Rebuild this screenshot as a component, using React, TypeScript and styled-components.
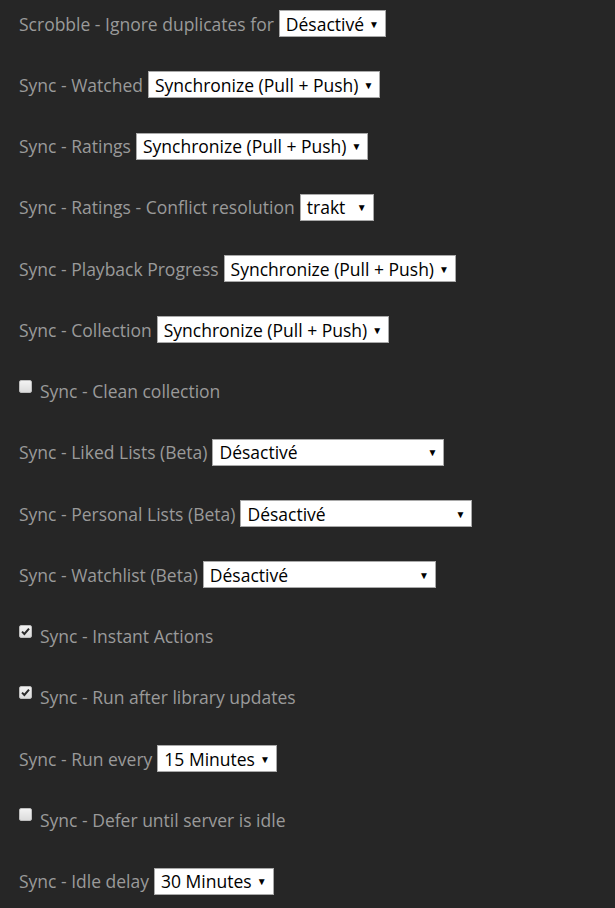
import styled, { createGlobalStyle } from 'styled-components';

const GlobalStyle = createGlobalStyle`
  html, body {
    margin: 0;
    padding: 0;
    background: #262626;
  }
  body {
    font-family: "Open Sans", "Liberation Sans", sans-serif;
  }
`;

type Item =
  | { kind: 'select'; label: string; value: string; width?: number }
  | { kind: 'check'; label: string; checked: boolean };

const items: Item[] = [
  { kind: 'select', label: 'Scrobble - Ignore duplicates for', value: 'Désactivé' },
  { kind: 'select', label: 'Sync - Watched', value: 'Synchronize (Pull + Push)' },
  { kind: 'select', label: 'Sync - Ratings', value: 'Synchronize (Pull + Push)' },
  { kind: 'select', label: 'Sync - Ratings - Conflict resolution', value: 'trakt', width: 74 },
  { kind: 'select', label: 'Sync - Playback Progress', value: 'Synchronize (Pull + Push)' },
  { kind: 'select', label: 'Sync - Collection', value: 'Synchronize (Pull + Push)' },
  { kind: 'check', label: 'Sync - Clean collection', checked: false },
  { kind: 'select', label: 'Sync - Liked Lists (Beta)', value: 'Désactivé', width: 232 },
  { kind: 'select', label: 'Sync - Personal Lists (Beta)', value: 'Désactivé', width: 232 },
  { kind: 'select', label: 'Sync - Watchlist (Beta)', value: 'Désactivé', width: 233 },
  { kind: 'check', label: 'Sync - Instant Actions', checked: true },
  { kind: 'check', label: 'Sync - Run after library updates', checked: true },
  { kind: 'select', label: 'Sync - Run every', value: '15 Minutes' },
  { kind: 'check', label: 'Sync - Defer until server is idle', checked: false },
  { kind: 'select', label: 'Sync - Idle delay', value: '30 Minutes' },
];

const App = () => {
  return (
    <>
      <GlobalStyle />
      <Page>
        {items.map((item) =>
          item.kind === 'select' ? (
            <Row key={item.label}>
              <Label>{item.label}</Label>
              <SelectBox $width={item.width}>
                <Value>{item.value}</Value>
                <Arrow>▼</Arrow>
              </SelectBox>
            </Row>
          ) : (
            <Row key={item.label}>
              <CheckBox $checked={item.checked}>
                {item.checked && (
                  <svg width="9" height="9" viewBox="0 0 9 9">
                    <path d="M1 4.6 L3.4 7 L8 1.6" fill="none" stroke="#2a2a2a" strokeWidth="2" />
                  </svg>
                )}
              </CheckBox>
              <CheckLabel>{item.label}</CheckLabel>
            </Row>
          )
        )}
      </Page>
    </>
  );
};
export default App;

const Page = styled.div`
  display: flex;
  flex-direction: column;
  gap: 34.25px;
  padding: 10px 0 0 19px;
  min-height: 908px;
  box-sizing: border-box;
`;

const Row = styled.div`
  display: flex;
  align-items: center;
  height: 27px;
`;

const Label = styled.span`
  font-size: 17.5px;
  color: #9a9a9a;
  margin-right: 5px;
  white-space: nowrap;
`;

const CheckLabel = styled(Label)`
  margin-left: 8px;
`;

const SelectBox = styled.div<{ $width?: number }>`
  display: flex;
  align-items: center;
  justify-content: space-between;
  gap: 5px;
  box-sizing: border-box;
  height: 27px;
  width: ${(p) => (p.$width ? `${p.$width}px` : 'auto')};
  padding: 0 6px 0 6px;
  background: #ffffff;
  border: 1px solid #a9a9a9;
  color: #000;
  font-size: 17.5px;
  white-space: nowrap;
`;

const Value = styled.span``;

const Arrow = styled.span`
  font-size: 10px;
  line-height: 1;
  color: #000;
`;

const CheckBox = styled.span<{ $checked: boolean }>`
  display: inline-flex;
  align-items: center;
  justify-content: center;
  width: 13px;
  height: 13px;
  box-sizing: border-box;
  margin-top: -10px;
  background: linear-gradient(#f2f2f2, #dcdcdc);
  border: 1px solid #bdbdbd;
  border-radius: 2px;
`;
